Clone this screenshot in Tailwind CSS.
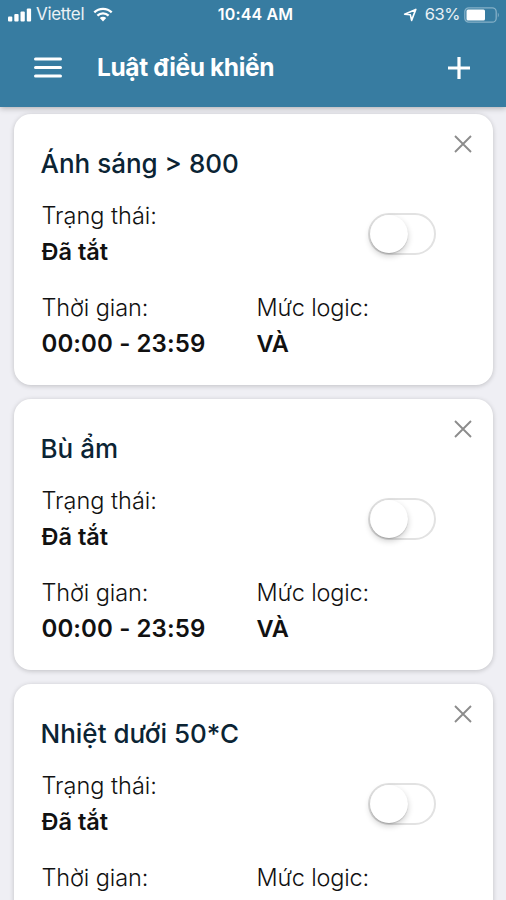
<!DOCTYPE html>
<html lang="vi">
<head>
<meta charset="utf-8">
<title>Luật điều khiển</title>
<script src="https://cdn.jsdelivr.net/npm/@tailwindcss/browser@4"></script>
</head>
<body class="w-[506px] h-[900px] overflow-hidden bg-[#efeff4] font-['Inter','Noto_Sans',sans-serif] text-[#111]">
<header class="relative z-10 h-[107px] bg-[#377ca1] text-white shadow-[0_1px_6px_rgba(0,0,0,0.3)]">
  <div class="grid grid-cols-[1fr_auto_1fr] items-center h-[29px] pl-2 pr-[6px] text-[17px] leading-[29px]">
    <div class="flex items-center">
      <svg class="w-6 h-[14px]" viewBox="0 0 24 14" fill="currentColor"><rect x="0" y="8.500" width="4.300" height="5" rx="1"/><rect x="6.300" y="6" width="4.300" height="7.500" rx="1"/><rect x="12.500" y="3.500" width="4.300" height="10" rx="1"/><rect x="18.800" y="0.500" width="4.300" height="13" rx="1"/></svg>
      <span class="ml-1 w-[57px] whitespace-nowrap text-[17px] tracking-[-0.3px] text-white/90">Viettel</span>
      <svg class="w-5 h-[15px]" viewBox="0 0 20 15"><path d="M1.300 5.400a12.400 12.400 0 0 1 17.400 0M4.400 8.600a8 8 0 0 1 11.200 0" fill="none" stroke="currentColor" stroke-width="2.300"/><path d="M6.800 11.100a4.500 4.500 0 0 1 6.400 0L10 14.400z" fill="currentColor"/></svg>
    </div>
    <span class="pl-[3px] text-[16px] font-semibold tracking-[0.15px]">10:44 AM</span>
    <div class="flex items-center justify-end">
      <svg class="w-[14px] h-[14px] mr-2" viewBox="0 0 14 14" fill="none" stroke="currentColor" stroke-width="1.600" stroke-linejoin="round"><path d="M12.800 1.400 8.600 12.400 7.400 6.800 1.600 6.200z"/></svg>
      <span class="text-[16.5px] tracking-[-0.5px] text-white/90">63%</span>
      <svg class="ml-1 w-9 h-4" viewBox="0 0 36 16"><rect x="0.800" y="0.800" width="31.400" height="14.400" rx="4" fill="none" stroke="#85b0c7" stroke-width="1.300"/><rect x="2.500" y="2.500" width="18.500" height="11" rx="1.500" fill="#fff"/><path d="M33.800 5.500q2 2.500 0 5z" fill="#85b0c7"/></svg>
    </div>
  </div>
  <div class="flex items-center h-[77px] pl-[34px] pr-[36px]">
    <svg class="w-7 h-[21px]" viewBox="0 0 28 21" stroke="currentColor" stroke-width="3" stroke-linecap="round"><path d="M1.500 2h25M1.500 10.500h25M1.500 19h25"/></svg>
    <h1 class="ml-[35px] flex-1 text-[24.5px] font-bold tracking-[-0.37px]">Luật điều khiển</h1>
    <svg class="w-[22px] h-[22px]" viewBox="0 0 22 22" stroke="currentColor" stroke-width="3.200"><path d="M0 11h22M11 0v22"/></svg>
  </div>
</header>
<main id="rules" class="flex flex-col gap-[13.800px] pt-[7px] px-[13.500px]"></main>
<template id="rule">
  <section class="relative h-[271px] shrink-0 rounded-[17px] bg-white px-[28px] pt-8 shadow-[0_1px_5px_rgba(0,0,0,0.2)]">
    <svg class="absolute right-[20.500px] top-[21px] w-[18px] h-[18px]" viewBox="0 0 18 18" stroke="#8c8c8c" stroke-width="1.900"><path d="M1 1l16 16M17 1 1 17"/></svg>
    <h2 class="-ml-px h-9 leading-9 text-[26px] font-medium text-[#0b2434]"></h2>
    <div class="mt-4 flex items-center justify-between pr-[29px] text-[23.500px] leading-[36px]">
      <div><p class="font-light">Trạng thái:</p><p class="font-semibold">Đã tắt</p></div>
      <div class="w-[68px] h-[42px] rounded-full border-2 border-[#e2e2e2]"><div class="w-[38px] h-[38px] rounded-full bg-white shadow-[0_3px_6px_rgba(0,0,0,0.2),0_1px_1px_rgba(0,0,0,0.15)]"></div></div>
    </div>
    <div class="mt-5 grid grid-cols-[215px_1fr] text-[23.500px] leading-[36px]">
      <div><p class="font-light tracking-[-0.1px]">Thời gian:</p><p class="text-[24px] font-semibold tracking-[0.1px]">00:00 - 23:59</p></div>
      <div><p class="font-light tracking-[-0.17px]">Mức logic:</p><p class="font-semibold">VÀ</p></div>
    </div>
  </section>
</template>
<script>
for (const name of ['Ánh sáng > 800', 'Bù ẩm', 'Nhiệt dưới 50*C']) {
  const card = document.getElementById('rule').content.cloneNode(true);
  card.querySelector('h2').textContent = name;
  document.getElementById('rules').append(card);
}
</script>
</body>
</html>
